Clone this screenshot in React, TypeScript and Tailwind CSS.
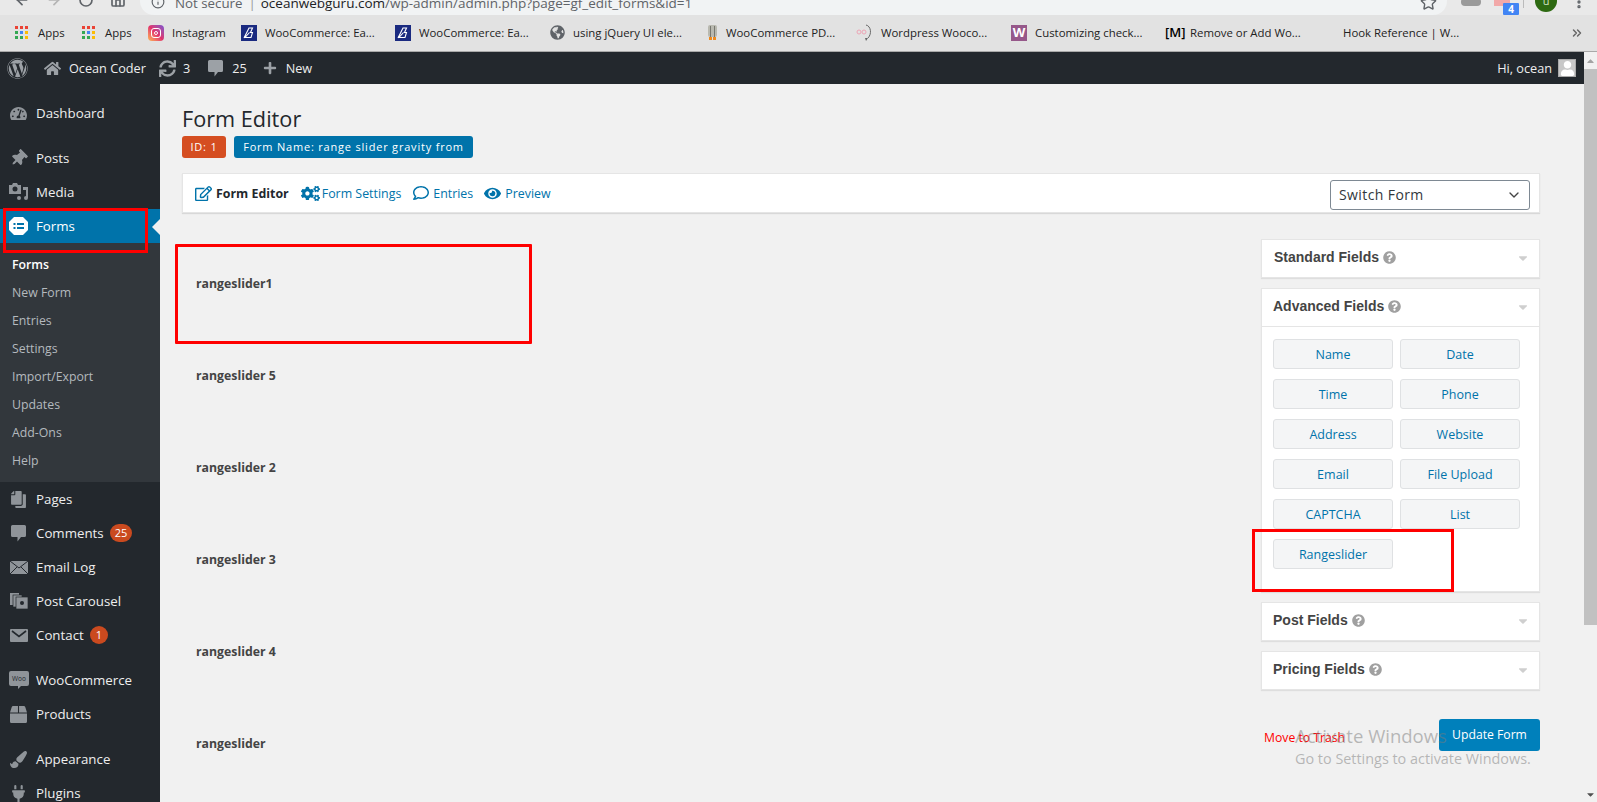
import type { ReactNode } from "react";
import { ArrowLeft, ArrowRight, RotateCw, Home, Info, Star, ChevronDown, MoreVertical, ChevronsRight } from "lucide-react";
import {
  FaWordpress,
  FaHome,
  FaSync,
  FaPlus,
  FaThumbtack,
  FaBox,
  FaPaintBrush,
  FaPlug,
  FaCopy,
  FaTachometerAlt,
  FaCogs,
  FaRegEdit,
  FaRegComment,
  FaEye,
  FaQuestionCircle,
  FaGlobeAmericas,
  FaCaretDown,
  FaUser,
} from "react-icons/fa";

const AppsIcon = () => (
  <div className="grid grid-cols-3 gap-[2px] w-[13px] h-[13px] mr-[2px]">
    <i className="bg-[#ea4335]" /><i className="bg-[#ea4335]" /><i className="bg-[#ea4335]" />
    <i className="bg-[#34a853]" /><i className="bg-[#4285f4]" /><i className="bg-[#fbbc05]" />
    <i className="bg-[#34a853]" /><i className="bg-[#34a853]" /><i className="bg-[#fbbc05]" />
  </div>
);

const InstaIcon = () => (
  <div className="w-4 h-4 rounded-[4px] bg-gradient-to-tr from-[#fdb44b] via-[#e1306c] to-[#7b4bd0] flex items-center justify-center">
    <div className="w-[10px] h-[10px] rounded-[3px] border border-white flex items-center justify-center">
      <div className="w-1 h-1 rounded-full border border-white" />
    </div>
  </div>
);

const BetaIcon = () => (
  <svg width="16" height="16" viewBox="0 0 16 16">
    <rect width="16" height="16" fill="#1a2a80" />
    <path d="M3 13 L8 3 H11.5 L9.5 7.5 H11.5 L10 12.5 H4 L8.5 7.5" fill="none" stroke="#fff" strokeWidth="1.1" />
  </svg>
);

const PencilIcon = () => (
  <svg width="11" height="16" viewBox="0 0 11 16">
    <rect x="1" y="0" width="9" height="12" rx="2" fill="#b9b9b0" />
    <path d="M3.5 1v11M7.5 1v11" stroke="#77776f" />
    <path d="M2 12h3v3H2zM6 12h3v3H6z" fill="#f08a1c" />
  </svg>
);

const SpiralIcon = () => (
  <svg width="17" height="18" viewBox="0 0 17 18">
    <path d="M10 1c5 1 6 9 2 13" fill="none" stroke="#666" strokeWidth="1" />
    <path d="M12 14l-2 3-1-3z" fill="#666" />
    <circle cx="3" cy="8" r="2" fill="none" stroke="#eda5b5" />
    <circle cx="8" cy="8" r="2" fill="none" stroke="#eda5b5" />
  </svg>
);

const WooSquare = () => (
  <div className="w-4 h-4 bg-[#96588a] flex items-center justify-center text-white text-[13px] font-bold leading-none">W</div>
);

const MediumIcon = () => <span className="w-[17px] text-[13px] font-semibold text-black leading-none whitespace-nowrap">[M]</span>;

const bookmarks = [
  { icon: <AppsIcon />, label: "Apps", box: "w-[67px]" },
  { icon: <AppsIcon />, label: "Apps", box: "w-[66px]" },
  { icon: <InstaIcon />, label: "Instagram", box: "w-[93px]" },
  { icon: <BetaIcon />, label: "WooCommerce: Ea...", box: "w-[154px]" },
  { icon: <BetaIcon />, label: "WooCommerce: Ea...", box: "w-[155px]" },
  { icon: <FaGlobeAmericas className="text-[#5f6368] text-[15px]" />, label: "using jQuery UI ele...", box: "w-[157px]" },
  { icon: <PencilIcon />, label: "WooCommerce PD...", box: "w-[149px]" },
  { icon: <SpiralIcon />, label: "Wordpress Wooco...", box: "w-[155px]" },
  { icon: <WooSquare />, label: "Customizing check...", box: "w-[154px]" },
  { icon: <MediumIcon />, label: "Remove or Add Wo...", box: "w-[178px]" },
  { icon: null, label: "Hook Reference | W...", box: "w-[200px]" },
];

const FormsIcon = () => (
  <svg width="19" height="20" viewBox="0 0 19 20">
    <path d="M5 1h9l5 5v8l-5 5H5l-5-5V6z" fill="#fff" />
    <path d="M4.5 7h2v2h-2zM8 7h7v2H8zM4.5 11h2v2h-2zM8 11h7v2H8z" fill="#0073aa" />
  </svg>
);

const MediaIcon = () => (
  <svg width="20" height="18" viewBox="0 0 20 18" fill="#8f9499">
    <path d="M0 2h3l1-2h4l1 2h3v9H0zM6 3.5a2.5 2.5 0 100 5 2.5 2.5 0 000-5z" fillRule="evenodd" />
    <path d="M14 4h5v11a2 2 0 11-2-2V7h-3z" />
    <circle cx="10" cy="15" r="2" />
  </svg>
);

const MailLogIcon = () => (
  <svg width="18" height="13" viewBox="0 0 18 13">
    <rect width="18" height="13" fill="#8f9499" />
    <path d="M0 0l9 7 9-7M0 13l7-7M18 13l-7-7" fill="none" stroke="#23282d" strokeWidth="1" />
  </svg>
);

const ContactIcon = () => (
  <svg width="18" height="13" viewBox="0 0 18 13">
    <rect width="18" height="13" rx="1" fill="#8f9499" />
    <path d="M2 2l7 5.5L16 2" fill="none" stroke="#23282d" strokeWidth="1.6" />
  </svg>
);

const CarouselIcon = () => (
  <svg width="18" height="17" viewBox="0 0 18 17" fill="#8f9499">
    <rect x="0" y="0" width="9" height="12" />
    <rect x="3" y="2" width="9" height="12" stroke="#23282d" strokeWidth="0.7" />
    <rect x="6" y="4" width="12" height="12" stroke="#23282d" strokeWidth="0.7" />
    <circle cx="12" cy="10" r="2" fill="#23282d" />
  </svg>
);

const WooIcon = () => (
  <svg width="20" height="20" viewBox="0 0 20 20">
    <path d="M2 1h16a2 2 0 012 2v11a2 2 0 01-2 2h-6l-3 3v-3H2a2 2 0 01-2-2V3a2 2 0 012-2z" fill="#8f9499" />
    <text x="10" y="11" textAnchor="middle" fontSize="6.5" fontFamily="Open Sans, sans-serif" fill="#23282d">Woo</text>
  </svg>
);

// square speech bubble, same shape in the bar and the menu
const BubbleIcon = ({ color }: { color: string }) => (
  <svg width="15" height="17" viewBox="0 0 15 17" fill={color}>
    <path d="M1.5 0h12A1.5 1.5 0 0115 1.5v9a1.5 1.5 0 01-1.5 1.5H10l-3.5 4.5V12h-5A1.5 1.5 0 010 10.5v-9A1.5 1.5 0 011.5 0z" />
  </svg>
);

function MenuRow({ icon, label, badge, active }: { icon: ReactNode; label: string; badge?: string; active?: boolean }) {
  return (
    <div className={`h-[34px] flex items-center ${active ? "bg-[#0073aa] text-white relative" : "text-[#eeeeee]"}`}>
      <div className="w-9 flex items-center justify-center shrink-0 pl-[1px] text-[#8f9499] text-[17px]">{icon}</div>
      <span className="text-[13.3px] pt-[2px]">{label}</span>
      {badge && (
        <span className="ml-[6px] min-w-[18px] h-[18px] px-[5px] rounded-full bg-[#ca4a1f] text-white text-[11px] leading-[18px] text-center">{badge}</span>
      )}
      {active && (
        <span className="absolute right-0 top-[10px] w-0 h-0 border-y-[8px] border-y-transparent border-r-[8px] border-r-[#f1f1f1]" />
      )}
    </div>
  );
}

const subItems = ["New Form", "Entries", "Settings", "Import/Export", "Updates", "Add-Ons", "Help"];

function Sidebar() {
  return (
    <aside className="w-40 shrink-0 bg-[#23282d] pt-3">
      <MenuRow icon={<FaTachometerAlt />} label="Dashboard" />
      <div className="h-[11px]" />
      <MenuRow icon={<FaThumbtack className="rotate-45" />} label="Posts" />
      <MenuRow icon={<MediaIcon />} label="Media" />
      <MenuRow icon={<FormsIcon />} label="Forms" active />
      <div className="bg-[#32373c] h-[239px] pt-2">
        <div className="h-[28px] pl-3 flex items-center text-[12.3px] font-semibold text-white">Forms</div>
        {subItems.map((s) => (
          <div key={s} className="h-[28px] pl-3 flex items-center text-[12.3px] text-[#b4b9be]">{s}</div>
        ))}
      </div>
      <MenuRow icon={<FaCopy className="-scale-x-100" />} label="Pages" />
      <MenuRow icon={<BubbleIcon color="#8f9499" />} label="Comments" badge="25" />
      <MenuRow icon={<MailLogIcon />} label="Email Log" />
      <MenuRow icon={<CarouselIcon />} label="Post Carousel" />
      <MenuRow icon={<ContactIcon />} label="Contact" badge="1" />
      <div className="h-[11px]" />
      <MenuRow icon={<WooIcon />} label="WooCommerce" />
      <MenuRow icon={<FaBox />} label="Products" />
      <div className="h-[11px]" />
      <MenuRow icon={<FaPaintBrush />} label="Appearance" />
      <MenuRow icon={<FaPlug />} label="Plugins" />
    </aside>
  );
}

function AdminBar() {
  return (
    <div className="h-8 bg-[#23282d] text-[#eeeeee] text-[12.7px] flex items-center shrink-0">
      <FaWordpress className="ml-[7px] text-[21px] text-[#9ca1a6]" />
      <FaHome className="ml-4 text-[17px] text-[#9ca1a6]" />
      <span className="ml-2 pt-[1px]">Ocean Coder</span>
      <FaSync className="ml-[13px] text-[17px] text-[#9ca1a6]" />
      <span className="ml-[7px] pt-[1px]">3</span>
      <div className="ml-[18px]"><BubbleIcon color="#9ca1a6" /></div>
      <span className="ml-[9px] pt-[1px]">25</span>
      <FaPlus className="ml-4 text-[14px] text-[#9ca1a6]" />
      <span className="ml-[9px] pt-[1px]">New</span>
      <span className="ml-auto pt-[1px]">Hi, ocean</span>
      <div className="ml-[6px] mr-2 w-[18px] h-[18px] bg-[#c8c8c8] border border-[#aaa] flex items-end justify-center overflow-hidden">
        <FaUser className="text-white text-[15px]" />
      </div>
    </div>
  );
}

function PanelHeader({ title, bordered, tight }: { title: string; bordered?: boolean; tight?: boolean }) {
  return (
    <div className={`${bordered ? "h-[38px] border-b border-[#e5e5e5]" : "h-[37px]"} flex items-center pb-[2px] ${tight ? "pl-[11px]" : "pl-3"} pr-[9px]`}>
      <span className="font-['Liberation_Sans',sans-serif] font-bold text-[14px] text-[#444]">{title}</span>
      <FaQuestionCircle className="ml-1 text-[13px] text-[#a0a0a0]" />
      <FaCaretDown className="ml-auto text-[14px] text-[#cfcfcf]" />
    </div>
  );
}

const panelBox = "bg-white border border-[#e5e5e5] shadow-[0_1px_1px_rgba(0,0,0,0.08)]";
const advanced = ["Name", "Date", "Time", "Phone", "Address", "Website", "Email", "File Upload", "CAPTCHA", "List", "Rangeslider"];
const fieldLabels = ["rangeslider1", "rangeslider 5", "rangeslider 2", "rangeslider 3", "rangeslider 4", "rangeslider"];

function Toolbar() {
  return (
    <div className="h-10 bg-white border border-[#e5e5e5] shadow-[0_1px_1px_rgba(0,0,0,0.1)] flex items-center pl-3 pr-[9px] text-[12.4px] text-[#0073aa]">
      <FaRegEdit className="text-[17px]" />
      <span className="ml-1 pt-[2px] font-bold text-[#23282d]">Form Editor</span>
      <FaCogs className="ml-3 text-[19px]" />
      <span className="ml-[2px] pt-[2px]">Form Settings</span>
      <FaRegComment className="ml-3 text-[16px]" />
      <span className="ml-1 pt-[2px]">Entries</span>
      <FaEye className="ml-[11px] text-[17px]" />
      <span className="ml-1 pt-[2px]">Preview</span>
      <div className="ml-auto mt-[3px] w-[200px] h-[30px] bg-white border border-[#7e8993] rounded-[3px] pl-2 pr-[7px] flex items-center justify-between text-[14px] tracking-[0.4px] text-[#32373c]">
        Switch Form
        <ChevronDown size={16} strokeWidth={2} className="text-[#444]" />
      </div>
    </div>
  );
}

export default function App() {
  return (
    <div className="relative w-[1597px] h-[802px] overflow-hidden bg-[#f1f1f1] font-['Open_Sans',sans-serif]">
      {/* Browser chrome */}
      <div className="h-[52px] bg-[#e2e2e2] border-b border-[#a9a9a9] flex flex-col shrink-0">
        <div className="h-[15px] overflow-hidden flex items-start text-[#5f6368] bg-[#e9e9e9]">
          <div className="w-[140px] shrink-0 flex pl-[14px] gap-[16px] -mt-[8px]">
            <ArrowLeft size={16} strokeWidth={2.5} />
            <ArrowRight size={16} strokeWidth={2.5} className="text-[#b4b4b4]" />
            <RotateCw size={16} strokeWidth={2.5} />
            <Home size={16} strokeWidth={2.5} />
          </div>
          <div className="w-[1307px] h-[15px] bg-[#f1f3f4] rounded-b-[14px] flex items-start pl-[11px] text-[13.3px] whitespace-nowrap">
            <Info size={14} className="-mt-[5px]" />
            <span className="ml-[10px] -mt-[9px] leading-[24px]">Not secure</span>
            <span className="ml-[6px] -mt-[9px] leading-[24px] text-[#999]">|</span>
            <span className="ml-[5px] -mt-[9px] leading-[24px] text-[13.5px] text-[#202124]">oceanwebguru.com<span className="text-[#5f6368]">/wp-admin/admin.php?page=gf_edit_forms&id=1</span></span>
            <Star size={17} className="ml-auto mr-[10px] -mt-[6px]" />
          </div>
          <div className="flex-1 relative">
            <div className="absolute left-[14px] -top-[2px] w-5 h-[8px] rounded-full bg-[#9a9a9a]" />
            <div className="absolute left-[47px] -top-[2px] w-4 h-[8px] bg-[#f2a9a9]" />
            <div className="absolute left-[56px] top-[3px] w-4 h-[12px] bg-[#4285f4] rounded-[1px] text-white text-[10px] font-bold text-center leading-[12px]">4</div>
            <div className="absolute left-[76px] top-0 w-px h-[8px] bg-[#bbb]" />
            <div className="absolute left-[88px] -top-[10px] w-[22px] h-[22px] rounded-full bg-[#2e6a12] text-[#cfe0c0] text-[11px] text-center leading-[22px]">u</div>
            <MoreVertical size={16} strokeWidth={3} className="absolute left-[124px] -top-[6px]" />
          </div>
        </div>
        <div className="flex-1 flex items-center pl-[15px] relative text-[11.4px] text-[#222]">
          {bookmarks.map((b, i) => (
            <div key={i} className={`${b.box} shrink-0 flex items-center gap-2 whitespace-nowrap`}>
              {b.icon}
              <span>{b.label}</span>
            </div>
          ))}
          <ChevronsRight size={14} strokeWidth={2.5} className="absolute left-[1570px] top-[11px] text-[#666]" />
        </div>
      </div>

      <div className="flex h-[750px]">
        <div className="w-[1584px] flex flex-col">
          <AdminBar />
          <div className="flex flex-1 min-h-0">
            <Sidebar />
            <main className="flex-1 pl-[22px] pr-[44px]">
              <h1 className="mt-[19px] text-[21.7px] leading-[32px] text-[#23282d]">Form Editor</h1>
              <div className="flex gap-2 mt-[1px] text-[11px] tracking-[0.8px] text-white">
                <span className="w-[44px] h-[22px] rounded-[3px] bg-[#d54e21] flex items-center justify-center">ID: 1</span>
                <span className="w-[239px] h-[22px] rounded-[3px] bg-[#0073aa] flex items-center justify-center whitespace-nowrap">Form Name: range slider gravity from</span>
              </div>
              <div className="mt-[15px]">
                <Toolbar />
              </div>
              <div className="flex justify-between">
                <div className="pl-[14px] pt-[25px]">
                  {fieldLabels.map((f) => (
                    <div key={f} className="h-[92px] text-[12.3px] leading-[92px] font-bold text-[#444]">{f}</div>
                  ))}
                </div>
                <div className="w-[279px] mt-[26px] flex flex-col">
                  <div className={panelBox}><PanelHeader title="Standard Fields" /></div>
                  <div className={`${panelBox} mt-[10px]`}>
                    <PanelHeader title="Advanced Fields" bordered tight />
                    <div className="grid grid-cols-[120px_120px] gap-x-[7px] gap-y-[10px] pl-[11px] pt-[12px] h-[264px] content-start">
                      {advanced.map((a) => (
                        <div key={a} className="h-[30px] bg-[#f4f5f6] border border-[#dfe1e3] rounded-[3px] flex items-center justify-center pt-[2px] text-[12.5px] text-[#0073aa]">{a}</div>
                      ))}
                    </div>
                  </div>
                  <div className={`${panelBox} mt-[10px]`}><PanelHeader title="Post Fields" tight /></div>
                  <div className={`${panelBox} mt-[10px]`}><PanelHeader title="Pricing Fields" tight /></div>
                  <div className="mt-[29px] flex items-center justify-between">
                    <span className="pl-[3px] pt-[6px] text-[12.2px] text-[#ff0000]">Move to Trash</span>
                    <button className="w-[101px] h-[32px] bg-[#0080bb] rounded-[3px] text-white text-[12.2px]">Update Form</button>
                  </div>
                </div>
              </div>
            </main>
          </div>
        </div>
        <div className="w-[13px] bg-[#f1f1f1] flex flex-col items-center">
          <FaCaretDown className="rotate-180 text-[11px] text-[#a3a3a3] mt-[4px]" />
          <div className="mt-[2px] w-full h-[556px] bg-[#c1c1c1]" />
          <FaCaretDown className="mt-auto text-[11px] text-[#505050] mb-[2px]" />
        </div>
      </div>

      {/* Annotation boxes */}
      <div className="absolute left-[3px] top-[208px] w-[145px] h-[45px] border-[3px] border-[#ff0000]" />
      <div className="absolute left-[175px] top-[244px] w-[357px] h-[100px] border-[3px] border-[#ff0000] rounded-[1px]" />
      <div className="absolute left-[1252px] top-[529px] w-[202px] h-[63px] border-[3px] border-[#ff0000]" />

      {/* Windows watermark */}
      <div className="absolute left-[1295px] top-[722px] text-[#7a7a7a]/50 pointer-events-none whitespace-nowrap">
        <div className="text-[18.5px] leading-[28px]">Activate Windows</div>
        <div className="text-[14.4px] leading-[18px]">Go to Settings to activate Windows.</div>
      </div>
    </div>
  );
}
